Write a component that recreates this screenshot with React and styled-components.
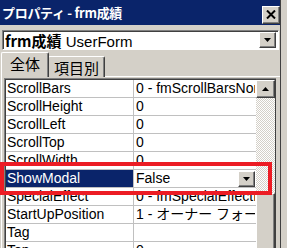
import styled, { createGlobalStyle } from 'styled-components';

const GlobalStyle = createGlobalStyle`
  html, body {
    margin: 0;
    padding: 0;
    background: #d4d0c8;
    overflow: hidden;
  }
`;

const uiFont = `"Liberation Sans", "Noto Sans CJK JP", sans-serif`;

const rows = [
  { name: 'ScrollBars', value: '0 - fmScrollBarsNone' },
  { name: 'ScrollHeight', value: '0' },
  { name: 'ScrollLeft', value: '0' },
  { name: 'ScrollTop', value: '0' },
  { name: 'ScrollWidth', value: '0' },
  { name: 'ShowModal', value: 'False', selected: true },
  { name: 'SpecialEffect', value: '0 - fmSpecialEffectFlat' },
  { name: 'StartUpPosition', value: '1 - オーナー フォームの中央' },
  { name: 'Tag', value: '' },
  { name: 'Top', value: '0' },
];

const Arrow = ({ up }) => (
  <svg width="7" height="4" viewBox="0 0 7 4">
    <path d={up ? 'M0 4 L7 4 L3.5 0 Z' : 'M0 0 L7 0 L3.5 4 Z'} fill="#000" />
  </svg>
);

const PropertiesWindow = ({ className }) => (
  <div className={className}>
    <div className="title-bar">
      <span className="title">プロパティ - frm成績</span>
      <RaisedButton $w={18} $h={18}>
        <svg width="10" height="9" viewBox="0 0 10 9">
          <path d="M1 0.5 L9 8.5 M9 0.5 L1 8.5" stroke="#000" strokeWidth="2" />
        </svg>
      </RaisedButton>
    </div>

    <div className="object-select">
      <span className="object-name">
        <b>frm成績</b> UserForm
      </span>
      <RaisedButton $w={17} $h={16}>
        <Arrow />
      </RaisedButton>
    </div>

    <div className="tabs">
      <Tab $active>全体</Tab>
      <Tab>項目別</Tab>
    </div>

    <div className="tab-panel">
      <div className="grid">
        <div className="grid-rows">
          {rows.map((row) => (
            <Row key={row.name}>
              <NameCell $selected={row.selected}>{row.name}</NameCell>
              <ValueCell>
                <span>{row.value}</span>
                {row.selected && (
                  <RaisedButton $w={17} $h={16}>
                    <Arrow />
                  </RaisedButton>
                )}
              </ValueCell>
            </Row>
          ))}
        </div>
        <div className="scrollbar">
          <RaisedButton $w={19} $h={18}>
            <Arrow up />
          </RaisedButton>
          <div className="track" />
          <div className="thumb" />
        </div>
      </div>
    </div>

    <div className="highlight" />
  </div>
);

const RaisedButton = styled.div`
  width: ${(p) => p.$w}px;
  height: ${(p) => p.$h}px;
  box-sizing: border-box;
  flex-shrink: 0;
  background: #d4d0c8;
  border-top: 1px solid #fff;
  border-left: 1px solid #fff;
  border-right: 1px solid #404040;
  border-bottom: 1px solid #404040;
  box-shadow: inset -1px -1px 0 #808080;
  display: flex;
  align-items: center;
  justify-content: center;
`;

const Tab = styled.div`
  box-sizing: border-box;
  height: ${(p) => (p.$active ? 25 : 21)}px;
  margin-top: ${(p) => (p.$active ? 0 : 4)}px;
  padding: 0 ${(p) => (p.$active ? 8 : 5)}px;
  background: #d4d0c8;
  border-top: 1px solid #fff;
  border-left: 1px solid #fff;
  border-right: 1px solid #404040;
  box-shadow: inset -1px 0 0 #808080;
  border-radius: 2px 2px 0 0;
  font-family: "Noto Sans CJK JP", sans-serif;
  font-size: 15px;
  line-height: 21px;
  color: #000;
  position: relative;
  z-index: ${(p) => (p.$active ? 1 : 0)};
  margin-right: ${(p) => (p.$active ? -1 : 0)}px;
`;

const Row = styled.div`
  display: flex;
  height: 18px;
  box-sizing: border-box;
  border-bottom: 1px solid #c0c0c0;
  background: #fff;
`;

const NameCell = styled.div`
  width: 128px;
  flex-shrink: 0;
  box-sizing: border-box;
  border-right: 1px solid #c0c0c0;
  padding-left: 1px;
  font-family: ${uiFont};
  font-size: 14px;
  line-height: 17px;
  white-space: nowrap;
  overflow: hidden;
  background: ${(p) => (p.$selected ? '#0a246a' : '#fff')};
  color: ${(p) => (p.$selected ? '#fff' : '#000')};
`;

const ValueCell = styled.div`
  flex: 1;
  min-width: 0;
  display: flex;
  align-items: center;
  justify-content: space-between;
  padding: 0 1px 0 2px;
  font-family: ${uiFont};
  font-size: 14px;
  line-height: 17px;
  white-space: nowrap;
  overflow: hidden;
  color: #000;

  & span {
    overflow: hidden;
  }
`;

const App = styled(PropertiesWindow)`
  position: relative;
  width: 281px;
  height: 248px;
  overflow: hidden;
  background: #d4d0c8;
  border-right: 1px solid #404040;
  box-sizing: border-box;

  & .title-bar {
    height: 25px;
    background: #0a246a;
    display: flex;
    align-items: center;
    justify-content: space-between;
    padding: 0 1px 0 2px;
    margin-right: -1px;
  }

  & .title-bar ${RaisedButton} {
    margin-top: 4px;
  }

  & .title {
    color: #fff;
    font-family: "Noto Sans CJK JP", sans-serif;
    font-weight: bold;
    font-size: 13px;
    letter-spacing: -0.3px;
  }

  & .object-select {
    margin: 5px 1px 0 2px;
    height: 20px;
    box-sizing: border-box;
    background: #fff;
    border-top: 1px solid #808080;
    border-left: 1px solid #808080;
    border-right: 1px solid #fff;
    border-bottom: 1px solid #fff;
    box-shadow: inset 1px 1px 0 #404040;
    display: flex;
    align-items: center;
    justify-content: space-between;
    padding: 1px 2px 1px 2px;
  }

  & .object-name {
    font-family: ${uiFont};
    font-size: 15px;
    color: #000;
    white-space: nowrap;

    & b {
      font-family: "Noto Sans CJK JP", sans-serif;
      font-weight: bold;
    }
  }

  & .tabs {
    display: flex;
    align-items: flex-start;
    margin-top: 2px;
    padding-left: 1px;
    height: 25px;
  }

  & .tab-panel {
    margin-left: 1px;
    margin-top: -1px;
    border-top: 1px solid #fff;
    border-left: 1px solid #fff;
    padding: 1px 4px 0 2px;
    height: 200px;
  }

  & .grid {
    display: flex;
    border-top: 1px solid #808080;
    border-left: 1px solid #808080;
    box-shadow: inset 1px 1px 0 #404040;
    padding: 1px 0 0 1px;
    height: 190px;
    background: #fff;
  }

  & .grid-rows {
    flex: 1;
    min-width: 0;
  }

  & .scrollbar {
    width: 19px;
    display: flex;
    flex-direction: column;
    border-right: 1px solid #404040;
  }

  & .track {
    height: 95px;
    background-image: conic-gradient(#fff 25%, #d4d0c8 0 50%, #fff 0 75%, #d4d0c8 0);
    background-size: 2px 2px;
  }

  & .thumb {
    flex: 1;
    background: #d4d0c8;
    border-top: 1px solid #fff;
    border-left: 1px solid #fff;
    border-right: 1px solid #404040;
    box-shadow: inset -1px 0 0 #808080;
  }

  & .highlight {
    position: absolute;
    left: 0;
    top: 162px;
    width: 272px;
    height: 33px;
    box-sizing: border-box;
    border: 4px solid #ec1c24;
  }
`;

export default function Root() {
  return (
    <>
      <GlobalStyle />
      <App />
    </>
  );
}
